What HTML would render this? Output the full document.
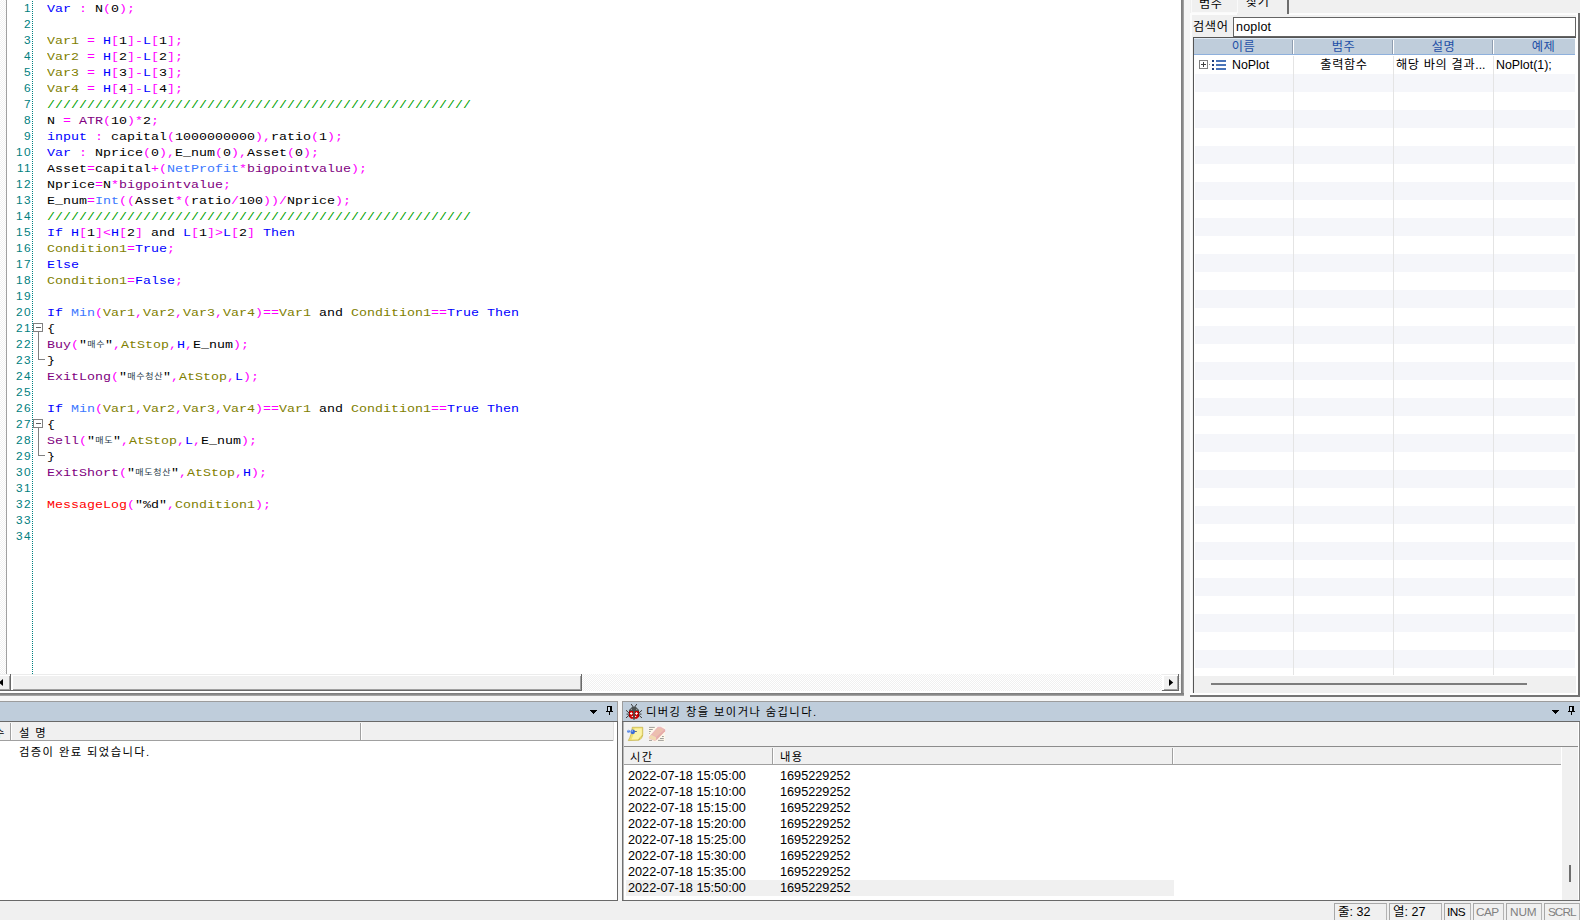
<!DOCTYPE html>
<html lang="ko">
<head>
<meta charset="utf-8">
<title>Editor</title>
<style>
*{box-sizing:border-box;margin:0;padding:0}
html,body{width:1580px;height:920px;overflow:hidden;background:#f0f0f0}
body{position:relative;font-family:"Liberation Sans","Noto Sans CJK KR",sans-serif;font-size:12px;color:#000}
.abs{position:absolute}
i{font-style:normal}
b{font-weight:normal}
/* ---------- editor ---------- */
#ed{position:absolute;left:0;top:0;width:1181px;height:674px;background:#fff;overflow:hidden}
.chk{background-color:#fff;background-image:linear-gradient(45deg,#f0f0f0 25%,transparent 25%,transparent 75%,#f0f0f0 75%),linear-gradient(45deg,#f0f0f0 25%,transparent 25%,transparent 75%,#f0f0f0 75%);background-size:2px 2px;background-position:0 0,1px 1px}
#ed .gut{position:absolute;left:0;top:0;width:6px;height:674px}
#ed .gl{position:absolute;left:6px;top:0;width:1px;height:674px;background:#a0a0a0}
#ed .dot{position:absolute;left:32px;top:0;width:1px;height:674px;background:repeating-linear-gradient(to bottom,#fff 0,#fff 1px,#008080 1px,#008080 2px)}
.ln{position:relative;height:16px;line-height:16px;white-space:pre;font-family:"Liberation Mono","Noto Sans CJK KR",monospace;font-size:13.33px}
.ln .no{position:absolute;left:0;top:0;width:32px;text-align:right;font-family:"Liberation Sans",sans-serif;font-size:11.8px;color:#008080;letter-spacing:1.4px}
.ln .tx{position:absolute;left:47px;top:1px;transform:scaleY(.86);transform-origin:0 11.5px}
.k{color:#0000ff}.o{color:#808000}.p{color:#ff00ff}.u{color:#800080}.f{color:#3c78ff}.c{color:#00a000}.r{color:#ff0000}.s{color:#000}
.h{display:inline-block;width:9px;font-size:9px;letter-spacing:0;text-align:center;font-family:"Noto Sans CJK KR",sans-serif;color:#1f3a48;vertical-align:baseline;line-height:8px;position:relative;top:-1px}
.fold{position:absolute;left:33px;width:10px;height:9px;border:1px solid #808080;background:#fff}
.fold:after{content:"";position:absolute;left:2px;top:3px;width:5px;height:1px;background:#606060}
.fv{position:absolute;left:38px;width:1px;background:#808080}
.fh{position:absolute;left:38px;width:7px;height:1px;background:#808080}
/* ---------- scrollbar ---------- */
.sbtn{position:absolute;background:#f0f0f0;border-right:1px solid #696969;border-bottom:1px solid #696969;box-shadow:inset 0 1px 0 #ececec,inset 2px 2px 0 #fff,inset -1px -1px 0 #a0a0a0}
/* ---------- right panel ---------- */
.hd{position:absolute;top:39px;letter-spacing:.65px;height:17px;background:#bfcddb;color:#1e4fa6;text-align:center;line-height:16px;font-size:12.2px}
.vsep{position:absolute;top:40px;width:1px;height:14px;background:#fff;box-shadow:-1px 0 0 #8e9db0}
.cl{position:absolute;top:56px;width:1px;height:619px;background:#e4e4e4}
/* ---------- bottom ---------- */
.tbar{position:absolute;top:701px;height:20px;background:#bfcddb;border-top:1px solid #9c9c9c}
.dr{position:absolute;left:626px;width:548px;height:16px;line-height:18px;font-size:12.7px;white-space:pre}
.dr.sel{background:linear-gradient(#fff 1px,#f0f0f0 1px);height:17px}
.dr .t1{position:absolute;left:2px;top:0}
.dr .t2{position:absolute;left:154px;top:0}
.sb{position:absolute;top:903px;height:17px;border-top:1px solid #a8a8a8;border-left:1px solid #a8a8a8;border-right:1px solid #b4b4b4;line-height:16px;font-size:11.8px;padding-left:2px;white-space:pre;overflow:hidden}
.g{color:#808080}
.ko{font-size:11.3px;letter-spacing:1.4px}
.ko2{font-size:12.2px;letter-spacing:.65px}
</style>
</head>
<body>

<!-- ================= EDITOR ================= -->
<div id="ed">
  <div class="gut chk"></div><div class="gl"></div><div class="dot"></div>
<div class="ln"><span class="no">1</span><span class="tx"><i class="k">Var</i> <i class="p">:</i> N<i class="p">(</i>0<i class="p">)</i><i class="p">;</i></span></div>
<div class="ln"><span class="no">2</span><span class="tx"></span></div>
<div class="ln"><span class="no">3</span><span class="tx"><i class="o">Var1</i> <i class="p">=</i> <i class="k">H</i><i class="p">[</i>1<i class="p">]</i><i class="p">-</i><i class="k">L</i><i class="p">[</i>1<i class="p">]</i><i class="p">;</i></span></div>
<div class="ln"><span class="no">4</span><span class="tx"><i class="o">Var2</i> <i class="p">=</i> <i class="k">H</i><i class="p">[</i>2<i class="p">]</i><i class="p">-</i><i class="k">L</i><i class="p">[</i>2<i class="p">]</i><i class="p">;</i></span></div>
<div class="ln"><span class="no">5</span><span class="tx"><i class="o">Var3</i> <i class="p">=</i> <i class="k">H</i><i class="p">[</i>3<i class="p">]</i><i class="p">-</i><i class="k">L</i><i class="p">[</i>3<i class="p">]</i><i class="p">;</i></span></div>
<div class="ln"><span class="no">6</span><span class="tx"><i class="o">Var4</i> <i class="p">=</i> <i class="k">H</i><i class="p">[</i>4<i class="p">]</i><i class="p">-</i><i class="k">L</i><i class="p">[</i>4<i class="p">]</i><i class="p">;</i></span></div>
<div class="ln"><span class="no">7</span><span class="tx"><i class="c">/////////////////////////////////////////////////////</i></span></div>
<div class="ln"><span class="no">8</span><span class="tx">N <i class="p">=</i> <i class="u">ATR</i><i class="p">(</i>10<i class="p">)</i><i class="p">*</i>2<i class="p">;</i></span></div>
<div class="ln"><span class="no">9</span><span class="tx"><i class="k">input</i> <i class="p">:</i> capital<i class="p">(</i>1000000000<i class="p">)</i><i class="p">,</i>ratio<i class="p">(</i>1<i class="p">)</i><i class="p">;</i></span></div>
<div class="ln"><span class="no">10</span><span class="tx"><i class="k">Var</i> <i class="p">:</i> Nprice<i class="p">(</i>0<i class="p">)</i><i class="p">,</i>E_num<i class="p">(</i>0<i class="p">)</i><i class="p">,</i>Asset<i class="p">(</i>0<i class="p">)</i><i class="p">;</i></span></div>
<div class="ln"><span class="no">11</span><span class="tx">Asset<i class="p">=</i>capital<i class="p">+</i><i class="p">(</i><i class="f">NetProfit</i><i class="p">*</i><i class="u">bigpointvalue</i><i class="p">)</i><i class="p">;</i></span></div>
<div class="ln"><span class="no">12</span><span class="tx">Nprice<i class="p">=</i>N<i class="p">*</i><i class="u">bigpointvalue</i><i class="p">;</i></span></div>
<div class="ln"><span class="no">13</span><span class="tx">E_num<i class="p">=</i><i class="f">Int</i><i class="p">(</i><i class="p">(</i>Asset<i class="p">*</i><i class="p">(</i>ratio<i class="p">/</i>100<i class="p">)</i><i class="p">)</i><i class="p">/</i>Nprice<i class="p">)</i><i class="p">;</i></span></div>
<div class="ln"><span class="no">14</span><span class="tx"><i class="c">/////////////////////////////////////////////////////</i></span></div>
<div class="ln"><span class="no">15</span><span class="tx"><i class="k">If</i> <i class="k">H</i><i class="p">[</i>1<i class="p">]</i><i class="p">&lt;</i><i class="k">H</i><i class="p">[</i>2<i class="p">]</i> and <i class="k">L</i><i class="p">[</i>1<i class="p">]</i><i class="p">&gt;</i><i class="k">L</i><i class="p">[</i>2<i class="p">]</i> <i class="k">Then</i></span></div>
<div class="ln"><span class="no">16</span><span class="tx"><i class="o">Condition1</i><i class="p">=</i><i class="k">True</i><i class="p">;</i></span></div>
<div class="ln"><span class="no">17</span><span class="tx"><i class="k">Else</i></span></div>
<div class="ln"><span class="no">18</span><span class="tx"><i class="o">Condition1</i><i class="p">=</i><i class="k">False</i><i class="p">;</i></span></div>
<div class="ln"><span class="no">19</span><span class="tx"></span></div>
<div class="ln"><span class="no">20</span><span class="tx"><i class="k">If</i> <i class="f">Min</i><i class="p">(</i><i class="o">Var1</i><i class="p">,</i><i class="o">Var2</i><i class="p">,</i><i class="o">Var3</i><i class="p">,</i><i class="o">Var4</i><i class="p">)</i><i class="p">=</i><i class="p">=</i><i class="o">Var1</i> and <i class="o">Condition1</i><i class="p">=</i><i class="p">=</i><i class="k">True</i> <i class="k">Then</i></span></div>
<div class="ln"><span class="no">21</span><span class="tx">{</span></div>
<div class="ln"><span class="no">22</span><span class="tx"><i class="u">Buy</i><i class="p">(</i><i class="s">&quot;<b class="h">매</b><b class="h">수</b>&quot;</i><i class="p">,</i><i class="o">AtStop</i><i class="p">,</i><i class="k">H</i><i class="p">,</i>E_num<i class="p">)</i><i class="p">;</i></span></div>
<div class="ln"><span class="no">23</span><span class="tx">}</span></div>
<div class="ln"><span class="no">24</span><span class="tx"><i class="u">ExitLong</i><i class="p">(</i><i class="s">&quot;<b class="h">매</b><b class="h">수</b><b class="h">청</b><b class="h">산</b>&quot;</i><i class="p">,</i><i class="o">AtStop</i><i class="p">,</i><i class="k">L</i><i class="p">)</i><i class="p">;</i></span></div>
<div class="ln"><span class="no">25</span><span class="tx"></span></div>
<div class="ln"><span class="no">26</span><span class="tx"><i class="k">If</i> <i class="f">Min</i><i class="p">(</i><i class="o">Var1</i><i class="p">,</i><i class="o">Var2</i><i class="p">,</i><i class="o">Var3</i><i class="p">,</i><i class="o">Var4</i><i class="p">)</i><i class="p">=</i><i class="p">=</i><i class="o">Var1</i> and <i class="o">Condition1</i><i class="p">=</i><i class="p">=</i><i class="k">True</i> <i class="k">Then</i></span></div>
<div class="ln"><span class="no">27</span><span class="tx">{</span></div>
<div class="ln"><span class="no">28</span><span class="tx"><i class="u">Sell</i><i class="p">(</i><i class="s">&quot;<b class="h">매</b><b class="h">도</b>&quot;</i><i class="p">,</i><i class="o">AtStop</i><i class="p">,</i><i class="k">L</i><i class="p">,</i>E_num<i class="p">)</i><i class="p">;</i></span></div>
<div class="ln"><span class="no">29</span><span class="tx">}</span></div>
<div class="ln"><span class="no">30</span><span class="tx"><i class="u">ExitShort</i><i class="p">(</i><i class="s">&quot;<b class="h">매</b><b class="h">도</b><b class="h">청</b><b class="h">산</b>&quot;</i><i class="p">,</i><i class="o">AtStop</i><i class="p">,</i><i class="k">H</i><i class="p">)</i><i class="p">;</i></span></div>
<div class="ln"><span class="no">31</span><span class="tx"></span></div>
<div class="ln"><span class="no">32</span><span class="tx"><i class="r">MessageLog</i><i class="p">(</i><i class="s">&quot;%d&quot;</i><i class="p">,</i><i class="o">Condition1</i><i class="p">)</i><i class="p">;</i></span></div>
<div class="ln"><span class="no">33</span><span class="tx"></span></div>
<div class="ln"><span class="no">34</span><span class="tx"></span></div>
  <div class="fold" style="top:323px"></div><div class="fv" style="top:332px;height:27px"></div><div class="fh" style="top:359px"></div>
  <div class="fold" style="top:419px"></div><div class="fv" style="top:428px;height:27px"></div><div class="fh" style="top:455px"></div>
</div>
<!-- editor horizontal scrollbar -->
<div class="abs chk" style="left:0;top:674px;width:1180px;height:17px"></div>
<div class="sbtn" style="left:-6px;top:674px;width:17px;height:17px"></div>
<svg class="abs" style="left:0;top:679px" width="5" height="7"><path d="M3 0L3 7L-1.2 3.5Z" fill="#000"/></svg>
<div class="sbtn" style="left:11px;top:674px;width:571px;height:17px"></div>
<div class="sbtn" style="left:1162px;top:674px;width:17px;height:17px"></div>
<svg class="abs" style="left:1169px;top:679px" width="5" height="7"><path d="M0 0L0 7L4.2 3.5Z" fill="#000"/></svg>
<!-- editor borders -->
<div class="abs" style="left:1181px;top:0;width:3px;height:696px;background:linear-gradient(to right,#7a7a7a,#8c8c8c 60%,#b4b4b4)"></div>
<div class="abs" style="left:0;top:691px;width:1181px;height:2px;background:#fff"></div>
<div class="abs" style="left:0;top:693px;width:1184px;height:3px;background:linear-gradient(to bottom,#7a7a7a,#8c8c8c 60%,#b4b4b4)"></div>
<!-- gaps -->
<div class="abs" style="left:1184px;top:0;width:6px;height:701px;background:#f6f6f6"></div>
<div class="abs" style="left:0;top:696px;width:1580px;height:5px;background:#f6f6f6"></div>

<!-- ================= RIGHT PANEL ================= -->
<div class="abs" style="left:1190px;top:0;width:390px;height:697px;background:#f0f0f0"></div>
<!-- tabs -->
<div class="abs" style="left:1191px;top:0;width:47px;height:13px;background:#f0f0f0;border-left:1px solid #fafafa;border-right:1px solid #fafafa;border-bottom:1px solid #fafafa"></div>
<div class="abs ko2" style="left:1199px;top:-4px;line-height:16px">범주</div>
<div class="abs ko2" style="left:1246px;top:-6px;line-height:16px">찾기</div>
<div class="abs" style="left:1287px;top:0;width:2px;height:14px;background:#6d6d6d"></div>
<div class="abs" style="left:1190px;top:13px;width:47px;height:2px;background:#fcfcfc"></div>
<div class="abs" style="left:1289px;top:13px;width:289px;height:2px;background:#fcfcfc"></div>
<div class="abs" style="left:1190px;top:13px;width:2px;height:682px;background:#fcfcfc"></div>
<div class="abs" style="left:1578px;top:13px;width:2px;height:684px;background:#707070"></div>
<div class="abs" style="left:1576px;top:15px;width:2px;height:680px;background:#fff"></div>
<!-- search -->
<div class="abs ko2" style="left:1193px;top:19px;line-height:16px">검색어</div>
<div class="abs" style="left:1233px;top:17px;width:343px;height:20px;background:#fff;border:1px solid #646464;padding-left:2px;font-size:12.5px;line-height:19px;letter-spacing:.2px">noplot</div>
<!-- table -->
<div class="abs" style="left:1193px;top:37px;width:383px;height:656px;background:#fff;border-left:1px solid #555;border-top:1px solid #555"></div>
<div class="abs" style="left:1194px;top:38px;width:381px;height:17px;background:#bfcddb;border-top:1px solid #dfeaf6;border-bottom:1px solid #8eb0dc"></div>
<div class="hd" style="left:1194px;width:99px;background:none">이름</div>
<div class="hd" style="left:1294px;width:99px;background:none">범주</div>
<div class="hd" style="left:1394px;width:99px;background:none">설명</div>
<div class="hd" style="left:1494px;width:99px;background:none">예제</div>
<div class="vsep" style="left:1293px"></div><div class="vsep" style="left:1393px"></div><div class="vsep" style="left:1493px"></div>
<div class="abs" style="left:1195px;top:74px;width:380px;height:601px;background:repeating-linear-gradient(to bottom,#f5f6fa 0,#f5f6fa 18px,#fff 18px,#fff 36px)"></div>
<div class="cl" style="left:1293px"></div><div class="cl" style="left:1393px"></div><div class="cl" style="left:1493px"></div>
<!-- row 1 -->
<svg class="abs" style="left:1199px;top:60px" width="30" height="10" shape-rendering="crispEdges">
  <rect x="0.5" y="0.5" width="8" height="8" fill="#fff" stroke="#808080"/>
  <path d="M2 4.5H7M4.5 2V7" stroke="#404040" fill="none"/>
  <rect x="10" y="4" width="1" height="1" fill="#909090"/>
  <rect x="13" y="0" width="2" height="2" fill="#1f3f7f"/><rect x="13" y="4" width="2" height="2" fill="#1f3f7f"/><rect x="13" y="8" width="2" height="2" fill="#1f3f7f"/>
  <rect x="17" y="0" width="10" height="2" fill="#4a74b8"/><rect x="17" y="4" width="10" height="2" fill="#4a74b8"/><rect x="17" y="8" width="10" height="2" fill="#4a74b8"/>
</svg>
<div class="abs" style="left:1232px;top:57px;font-size:12.4px;line-height:17px">NoPlot</div>
<div class="abs ko2" style="left:1294px;top:57px;width:100px;text-align:center;line-height:17px">출력함수</div>
<div class="abs ko2" style="left:1396px;top:57px;line-height:17px;white-space:pre">해당 바의 결과<span style="letter-spacing:0">...</span></div>
<div class="abs" style="left:1496px;top:57px;font-size:12.4px;line-height:17px">NoPlot(1);</div>
<!-- table h scrollbar -->
<div class="abs" style="left:1194px;top:676px;width:382px;height:17px;background:#f0f0f0"></div>
<div class="abs" style="left:1211px;top:683px;width:316px;height:2px;background:#7d7d7d"></div>
<div class="abs" style="left:1190px;top:693px;width:388px;height:2px;background:#fff"></div>
<div class="abs" style="left:1190px;top:695px;width:390px;height:2px;background:#757575"></div>

<!-- ================= BOTTOM LEFT PANEL ================= -->
<div class="tbar" style="left:0;width:618px;border-right:1px solid #9c9c9c"></div>
<svg class="abs" style="left:589px;top:710px" width="8" height="4" shape-rendering="crispEdges"><path d="M0 0H8L4 4Z" fill="#000"/></svg>
<svg class="abs" style="left:606px;top:706px" width="7" height="9" shape-rendering="crispEdges" fill="#000"><rect x="1" y="0" width="5" height="1"/><rect x="1" y="1" width="1" height="4"/><rect x="4" y="1" width="2" height="4"/><rect x="0" y="5" width="7" height="1"/><rect x="3" y="6" width="1" height="3"/><rect x="2" y="1" width="2" height="4" fill="#d4dfea"/></svg>
<div class="abs" style="left:0;top:721px;width:618px;height:1px;background:#696969"></div>
<div class="abs" style="left:0;top:722px;width:617px;height:178px;background:#fff"></div>
<div class="abs" style="left:617px;top:722px;width:1px;height:179px;background:#696969"></div>
<div class="abs" style="left:0;top:900px;width:618px;height:1px;background:#696969"></div>
<!-- header -->
<div class="abs" style="left:0;top:722px;width:614px;height:19px;background:#f0f0f0;border-bottom:1px solid #a0a0a0"></div>
<div class="abs" style="left:10px;top:723px;width:1px;height:17px;background:#a0a0a0;box-shadow:1px 0 0 #fff"></div>
<div class="abs" style="left:360px;top:723px;width:1px;height:17px;background:#a0a0a0;box-shadow:1px 0 0 #fff"></div>
<div class="abs" style="left:613px;top:722px;width:1px;height:19px;background:#e0e0e0"></div>
<div class="abs ko" style="left:-6px;top:725px;line-height:17px">수</div>
<div class="abs ko" style="left:19px;top:725px;line-height:17px;white-space:pre">설 명</div>
<div class="abs ko" style="left:19px;top:743px;line-height:18px;white-space:pre">검증이 완료 되었습니다.</div>
<!-- gap -->
<div class="abs" style="left:618px;top:701px;width:4px;height:200px;background:#f6f6f6"></div>

<!-- ================= DEBUG PANEL ================= -->
<div class="tbar" style="left:622px;width:958px;border-left:1px solid #9c9c9c"></div>
<div class="abs ko" style="left:646px;top:703px;line-height:18px;white-space:pre">디버깅 창을 보이거나 숨깁니다.</div>
<svg class="abs" style="left:1551px;top:710px" width="8" height="4" shape-rendering="crispEdges"><path d="M0 0H8L4 4Z" fill="#000"/></svg>
<svg class="abs" style="left:1568px;top:706px" width="7" height="9" shape-rendering="crispEdges" fill="#000"><rect x="1" y="0" width="5" height="1"/><rect x="1" y="1" width="1" height="4"/><rect x="4" y="1" width="2" height="4"/><rect x="0" y="5" width="7" height="1"/><rect x="3" y="6" width="1" height="3"/><rect x="2" y="1" width="2" height="4" fill="#d4dfea"/></svg>

<div class="abs" style="left:622px;top:721px;width:958px;height:1px;background:#696969"></div>
<div class="abs" style="left:622px;top:722px;width:1px;height:179px;background:#707070"></div><div class="abs" style="left:623px;top:722px;width:1px;height:179px;background:#b8b8b8"></div>
<div class="abs" style="left:1578px;top:722px;width:1px;height:179px;background:#fff"></div>
<div class="abs" style="left:1579px;top:722px;width:1px;height:179px;background:#8a8a8a"></div>
<!-- toolbar -->
<div class="abs" style="left:624px;top:722px;width:954px;height:24px;background:#f2f2f2"></div>

<!-- icons: ladybug, note, eraser (coords are 20x) -->
<svg class="abs" style="left:622px;top:700px" width="50" height="46" viewBox="0 0 1000 920">
  <g stroke="#3c3c3c" stroke-width="20" fill="none" stroke-linecap="square">
    <path d="M190 90L225 140M290 90L255 140"/>
    <path d="M88 212L140 258M88 352L140 306M392 212L340 258M392 352L340 306"/>
    <path d="M100 282H135M380 282H345"/>
  </g>
  <path d="M140 225V198L205 135H275L340 198V225Z" fill="#4a5050"/>
  <rect x="178" y="178" width="18" height="18" fill="#c8c8c8"/><rect x="286" y="178" width="18" height="18" fill="#c8c8c8"/>
  <path d="M140 222H340V330L300 375H180L140 330Z" fill="#cc0000"/>
  <path d="M140 222H160V350L140 320ZM340 222H320V350L340 320Z" fill="#a00000"/>
  <rect x="224" y="200" width="32" height="195" fill="#435252"/>
  <path d="M185 245V295M160 270H210M290 245V295M265 270H315" stroke="#fff" stroke-width="22"/>
  <rect x="195" y="318" width="22" height="22" fill="#fff"/><rect x="262" y="318" width="22" height="22" fill="#fff"/>
  <!-- note -->
  <path d="M205 545H415V690C415 740 380 790 330 805L125 812C170 740 195 650 205 545Z" fill="#f0e070" stroke="#bca93a" stroke-width="12"/>
  <path d="M250 570H395V690C390 730 360 770 320 785L190 790C225 720 245 650 250 570Z" fill="#fbf3a8"/>
  <path d="M330 805C345 770 370 730 415 705" fill="none" stroke="#bca93a" stroke-width="12"/>
  <path d="M250 630H297" stroke="#3b4a78" stroke-width="16"/>
  <circle cx="130" cy="625" r="30" fill="#5b8ae6"/><circle cx="215" cy="637" r="46" fill="#3a6cd8"/>
  <circle cx="122" cy="612" r="11" fill="#d6e4ff"/><circle cx="203" cy="618" r="14" fill="#d6e4ff"/>
  <!-- eraser -->
  <rect x="535" y="535" width="325" height="295" fill="#fdf8ea"/>
  <path d="M540 548H655M540 590H615M540 630H575M540 670H556M800 730H836M760 770H836M720 808H836M540 808H600" stroke="#868686" stroke-width="16"/>
  <path d="M715 545L775 545L858 592L858 625L690 795L655 812L545 765L545 740Z" fill="#ecbfae" stroke="#e49ac4" stroke-width="10"/>
  <path d="M585 690L690 740L690 795L655 812L545 765L545 740Z" fill="#f0dab0"/>
  <path d="M690 740L858 592L858 625L690 795Z" fill="#e6b0a4"/>
  <path d="M585 690L690 740L858 592M690 740V795" stroke="#e49ac4" stroke-width="8" fill="none"/>
</svg>
<div class="abs" style="left:624px;top:746px;width:954px;height:1px;background:#8c8c8c"></div>
<!-- list -->
<div class="abs" style="left:624px;top:747px;width:938px;height:153px;background:#fff"></div>
<div class="abs" style="left:624px;top:747px;width:938px;height:18px;background:#f0f0f0;border-bottom:1px solid #a0a0a0"></div>
<div class="abs" style="left:772px;top:748px;width:1px;height:16px;background:#a0a0a0;box-shadow:1px 0 0 #fff"></div>
<div class="abs" style="left:1172px;top:748px;width:1px;height:16px;background:#a0a0a0;box-shadow:1px 0 0 #fff"></div>
<div class="abs ko" style="left:630px;top:749px;line-height:17px">시간</div>
<div class="abs ko" style="left:780px;top:749px;line-height:17px">내용</div>
<div id="rows">
<div class="dr" style="top:767px"><span class="t1">2022-07-18 15:05:00</span><span class="t2">1695229252</span></div>
<div class="dr" style="top:783px"><span class="t1">2022-07-18 15:10:00</span><span class="t2">1695229252</span></div>
<div class="dr" style="top:799px"><span class="t1">2022-07-18 15:15:00</span><span class="t2">1695229252</span></div>
<div class="dr" style="top:815px"><span class="t1">2022-07-18 15:20:00</span><span class="t2">1695229252</span></div>
<div class="dr" style="top:831px"><span class="t1">2022-07-18 15:25:00</span><span class="t2">1695229252</span></div>
<div class="dr" style="top:847px"><span class="t1">2022-07-18 15:30:00</span><span class="t2">1695229252</span></div>
<div class="dr" style="top:863px"><span class="t1">2022-07-18 15:35:00</span><span class="t2">1695229252</span></div>
<div class="dr sel" style="top:879px"><span class="t1">2022-07-18 15:50:00</span><span class="t2">1695229252</span></div>
</div>
<!-- v scrollbar -->
<div class="abs" style="left:1561px;top:747px;width:1px;height:18px;background:#fff"></div><div class="abs" style="left:1562px;top:747px;width:16px;height:153px;background:#f0f0f0"></div>
<div class="abs" style="left:1569px;top:865px;width:2px;height:17px;background:#6e6e6e"></div>
<div class="abs" style="left:622px;top:900px;width:958px;height:1px;background:#696969"></div>

<!-- ================= STATUS BAR ================= -->
<div class="sb" style="left:1334px;width:53px;padding-left:3px;font-size:12.5px">줄: 32</div>
<div class="sb" style="left:1389px;width:53px;padding-left:3px;font-size:12.5px">열: 27</div>
<div class="sb" style="left:1444px;width:27px;letter-spacing:-.5px">INS</div>
<div class="sb g" style="left:1473px;width:31px;letter-spacing:-.6px">CAP</div>
<div class="sb g" style="left:1506px;width:36px;letter-spacing:-.1px;padding-left:3px">NUM</div>
<div class="sb g" style="left:1544px;width:36px;letter-spacing:-1px;padding-left:3px">SCRL</div>

</body>
</html>
